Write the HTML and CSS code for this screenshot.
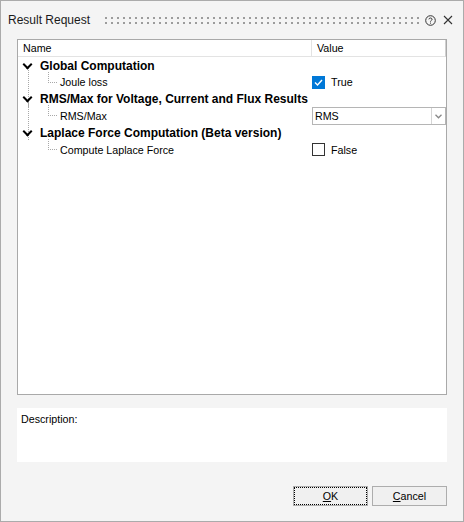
FILE: index.html
```html
<!DOCTYPE html>
<html>
<head>
<meta charset="utf-8">
<link rel="stylesheet" href="styles.css">
</head>
<body>
<div class="window">
  <div class="titlebar">
    <span class="title">Result Request</span>
    <span class="gripper"></span>
    <svg class="help" width="11" height="11" viewBox="0 0 11 11"><circle cx="5.5" cy="5.5" r="4.8" fill="none" stroke="#333" stroke-width="1"/><path d="M3.9 4.3 C3.9 2.6 7.1 2.6 7.1 4.3 C7.1 5.4 5.5 5.4 5.5 6.6" fill="none" stroke="#333" stroke-width="1"/><rect x="5" y="7.6" width="1" height="1" fill="#333"/></svg>
    <svg class="close" width="10" height="10" viewBox="0 0 10 10"><path d="M1 1 L9 9 M9 1 L1 9" stroke="#333" stroke-width="1.1"/></svg>
  </div>

  <div class="grid">
    <div class="head">
      <div class="hname">Name</div>
      <div class="hvalue">Value</div>
    </div>
    <div class="rows">
      <div class="row cat first">
        <span class="chev"></span>
        <span class="name">Global Computation</span>
      </div>
      <div class="row child short">
        <span class="name">Joule loss</span>
        <span class="value"><span class="check on"><svg width="9" height="7" viewBox="0 0 9 7"><path d="M1 3.5 L3.5 6 L8 1" fill="none" stroke="#fff" stroke-width="1.4"/></svg></span>True</span>
      </div>
      <div class="row cat">
        <span class="chev"></span>
        <span class="name">RMS/Max for Voltage, Current and Flux Results</span>
      </div>
      <div class="row child">
        <span class="name">RMS/Max</span>
        <span class="value">
          <span class="combo"><span class="ctext">RMS</span><span class="cbtn"><svg width="7" height="5" viewBox="0 0 7 5"><path d="M0.5 0.8 L3.5 3.8 L6.5 0.8" fill="none" stroke="#888" stroke-width="1.3"/></svg></span></span>
        </span>
      </div>
      <div class="row cat last">
        <span class="chev"></span>
        <span class="name">Laplace Force Computation (Beta version)</span>
      </div>
      <div class="row child">
        <span class="name">Compute Laplace Force</span>
        <span class="value"><span class="check"></span>False</span>
      </div>
    </div>
  </div>

  <div class="desc">Description:</div>

  <div class="buttons">
    <button class="btn focus"><u>O</u>K</button>
    <button class="btn"><u>C</u>ancel</button>
  </div>
</div>
</body>
</html>
```

FILE: styles.css
```css
html, body {
  margin: 0;
  padding: 0;
  background: #f4f4f4;
}
.window {
  box-sizing: border-box;
  width: 464px;
  height: 522px;
  border: 1px solid #ababab;
  background: #f4f4f4;
  display: flex;
  flex-direction: column;
  font-family: "Liberation Sans", Arial, sans-serif;
  font-size: 10.7px;
  color: #000;
}
.titlebar {
  height: 38px;
  display: flex;
  align-items: center;
  padding: 0 10px 0 7px;
}
.title {
  font-size: 12px;
  color: #1a1a1a;
}
.gripper {
  flex: 1;
  height: 7px;
  margin: 0 6px 0 15px;
  background-image:
    linear-gradient(90deg, transparent 2px, #f4f4f4 2px),
    linear-gradient(#9c9c9c 2px, transparent 2px);
  background-size: 6px 5px, 6px 5px;
}
.help {
  display: block;
  margin-right: 7px;
}
.close {
  display: block;
}

.grid {
  margin: 0 16px;
  height: 356px;
  box-sizing: border-box;
  border: 1px solid #a9a9a9;
  background: #fff;
  display: flex;
  flex-direction: column;
}
.head {
  display: grid;
  grid-template-columns: 294px 1fr;
  height: 16px;
  background: #fff;
  border-bottom: 1px solid #e3e3e3;
  border-right: 1px solid #d0d0d0;
  line-height: 16px;
}
.hname {
  padding-left: 5px;
  border-right: 1px solid #e3e3e3;
}
.hvalue {
  padding-left: 5px;
}
.rows {
  display: flex;
  flex-direction: column;
}
.row {
  position: relative;
  display: grid;
  grid-template-columns: 294px 1fr;
  height: 17px;
  align-items: center;
}
.row.short {
  height: 16px;
}
.row .name {
  white-space: nowrap;
}
.cat .name {
  font-weight: bold;
  font-size: 12px;
  padding-left: 22px;
}
.child .name {
  padding-left: 42px;
}
.chev {
  position: absolute;
  left: 6px;
  top: 4px;
  width: 5px;
  height: 5px;
  border-right: 2px solid #000;
  border-bottom: 2px solid #000;
  transform: rotate(45deg);
  transform-origin: center;
}
/* tree lines */
.cat::before {
  content: "";
  position: absolute;
  left: 10px;
  top: 13px;
  height: 38px;
  width: 1px;
  background-image: linear-gradient(#a8a8a8 1px, transparent 1px);
  background-size: 1px 2px;
}
.cat.last::before {
  display: none;
}
.child::before {
  content: "";
  position: absolute;
  left: 30px;
  top: -2px;
  height: 10px;
  width: 1px;
  background-image: linear-gradient(#a8a8a8 1px, transparent 1px);
  background-size: 1px 2px;
}
.child::after {
  content: "";
  position: absolute;
  left: 30px;
  top: 8px;
  width: 10px;
  height: 1px;
  background-image: linear-gradient(90deg, #a8a8a8 1px, transparent 1px);
  background-size: 2px 1px;
}
.value {
  display: flex;
  align-items: center;
  gap: 6px;
  padding-left: 0;
}
.check {
  box-sizing: border-box;
  width: 13px;
  height: 13px;
  border: 1px solid #333;
  background: #fff;
  display: flex;
  align-items: center;
  justify-content: center;
}
.check.on {
  border: none;
  background: #0078d7;
}
.check svg {
  display: block;
}
.combo {
  box-sizing: border-box;
  width: 134px;
  height: 18px;
  border: 1px solid #b5b5b5;
  display: flex;
  background: #fff;
}
.ctext {
  flex: 1;
  padding-left: 2px;
  line-height: 16px;
}
.cbtn {
  width: 13px;
  border-left: 1px solid #d5d5d5;
  display: flex;
  align-items: center;
  justify-content: center;
}
.cbtn svg {
  display: block;
}

.desc {
  margin: 13px 16px 0;
  height: 54px;
  box-sizing: border-box;
  background: #fff;
  padding: 4px 4px;
  line-height: 14px;
}

.buttons {
  display: flex;
  justify-content: flex-end;
  gap: 4px;
  margin: 24px 16px 0;
}
.btn {
  box-sizing: border-box;
  width: 75px;
  height: 20px;
  border: 1px solid #adadad;
  background: #f0f0f0;
  font-family: "Liberation Sans", Arial, sans-serif;
  font-size: 10.7px;
  color: #000;
  padding: 0;
  border-radius: 0;
}
.btn.focus {
  outline: 1px dotted #000;
  outline-offset: -2px;
}
```
